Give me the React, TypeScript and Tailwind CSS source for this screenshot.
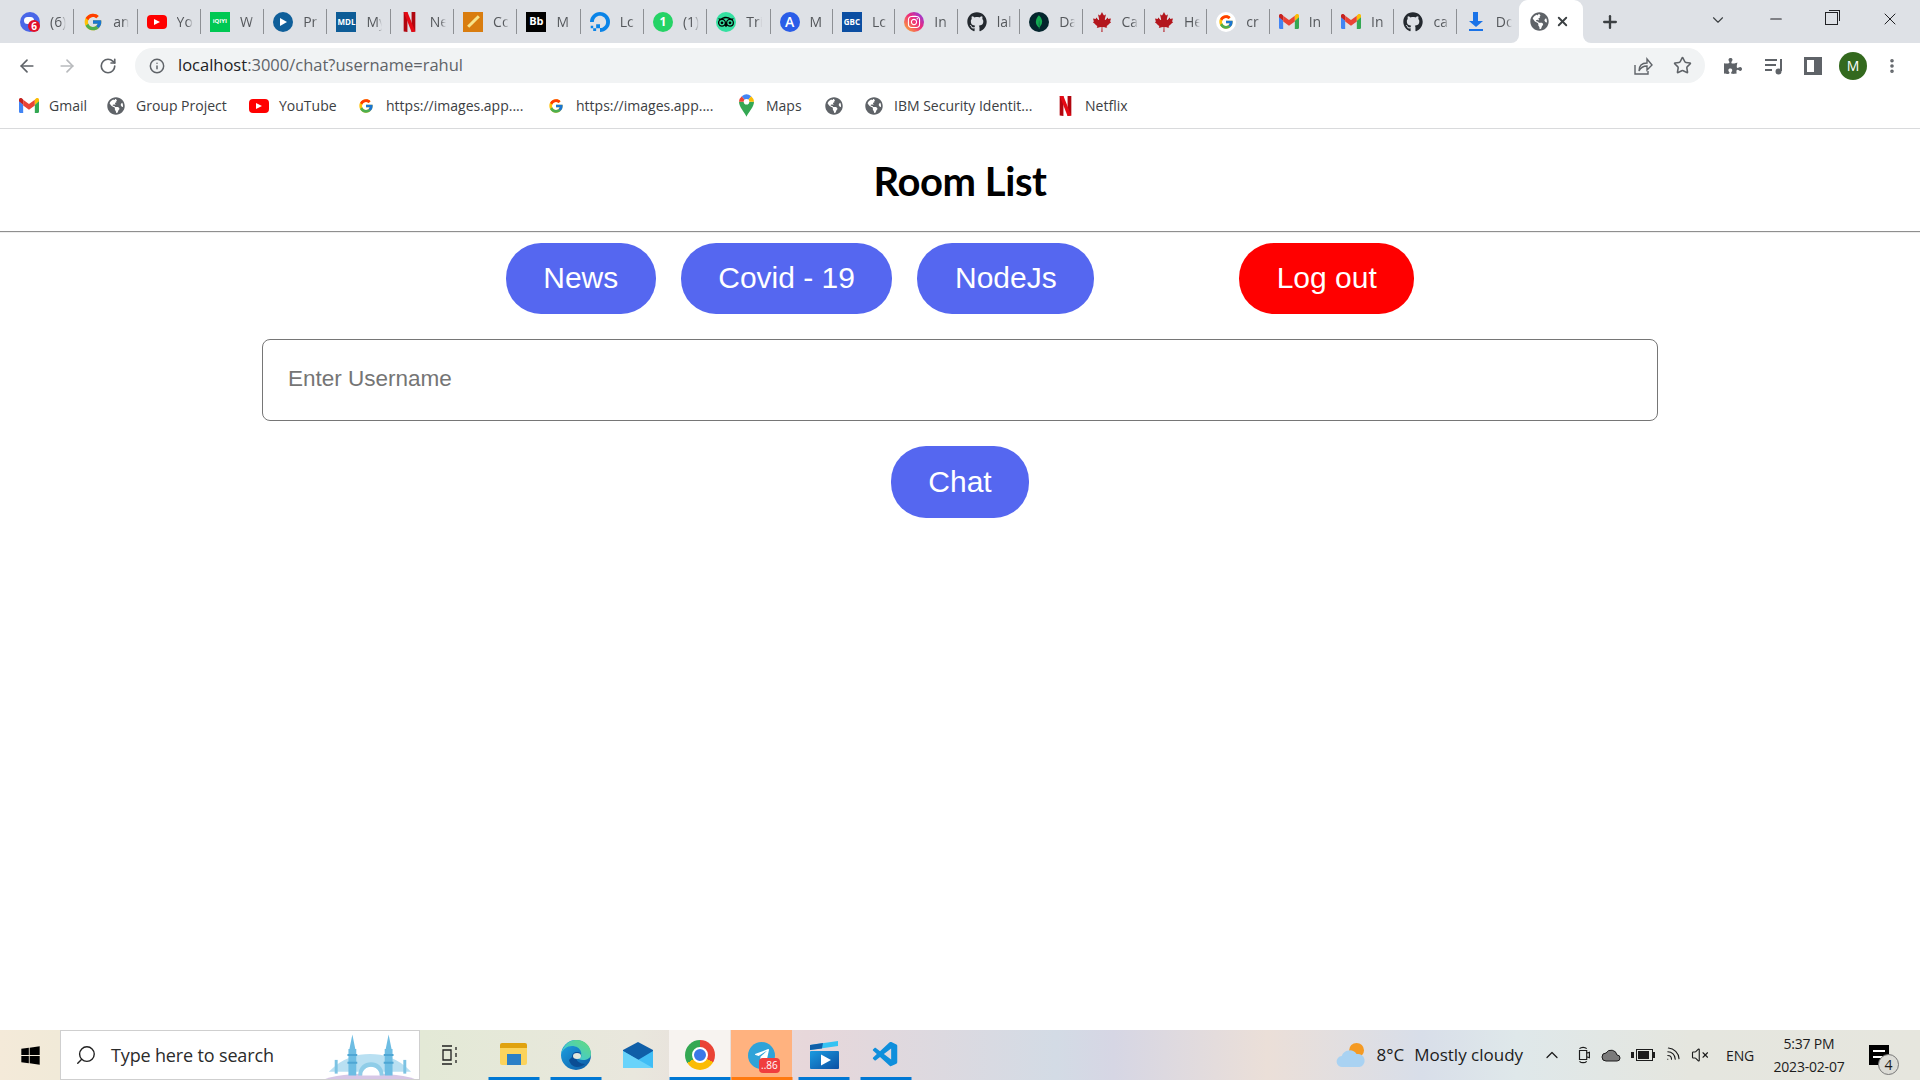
import { ReactNode } from "react";
import {
  ArrowLeft,
  ArrowRight,
  ChevronDown,
  ChevronUp,
  Info,
  Minus,
  MoreVertical,
  Plus,
  RotateCw,
  Search,
  Star,
  VolumeX,
  Wifi,
  X,
} from "lucide-react";
import { FaCanadianMapleLeaf, FaGithub, FaGlobeAmericas, FaInstagram, FaPuzzlePiece, FaTelegramPlane, FaWindows } from "react-icons/fa";
import { FcGoogle } from "react-icons/fc";
import { SiDigitalocean, SiMongodb, SiTripadvisor } from "react-icons/si";
import { VscVscode } from "react-icons/vsc";

const ui = "font-['Open_Sans','Noto_Sans',sans-serif]";

function GmailIcon() {
  return (
    <svg viewBox="0 0 24 18" className="h-[15px] w-5">
      <path d="M0 3v13.5C0 17.3.7 18 1.5 18H5V8z" fill="#4285f4" />
      <path d="M24 3v13.5c0 .8-.7 1.5-1.5 1.5H19V8z" fill="#34a853" />
      <path d="M5 8 0 4V2c0-1.8 2-2.6 3.3-1.6L5 1.7z" fill="#c5221f" />
      <path d="M5 9V2l7 5.2L19 2v7l-7 5.2z" fill="#ea4335" />
      <path d="m19 8 5-4V2c0-1.8-2-2.6-3.3-1.6L19 1.7z" fill="#fbbc04" />
    </svg>
  );
}

function YoutubeIcon() {
  return (
    <div className="flex h-[14px] w-5 items-center justify-center rounded-[4px] bg-[#ff0000]">
      <div className="h-0 w-0 border-y-[3.5px] border-l-[6px] border-y-transparent border-l-white" />
    </div>
  );
}

function NetflixIcon() {
  return (
    <svg viewBox="0 0 14 24" className="h-5 w-[13px]">
      <path d="M0 0h4.5v24L0 23.5z" fill="#b1060f" />
      <path d="M9.5 0H14v23.5L9.5 24z" fill="#b1060f" />
      <path d="M0 0h4.5l9.5 23.5L9.5 24z" fill="#e50914" />
    </svg>
  );
}

function MapsIcon() {
  return (
    <svg viewBox="0 0 16 24" className="h-[23px] w-[15px]">
      <path d="M8 24C6 19 0 14 0 8h16c0 6-6 11-8 16z" fill="#34a853" />
      <path d="M0 8a8 8 0 0 1 3-6l5 6z" fill="#ea4335" />
      <path d="M3 2a8 8 0 0 1 10 0L8 8z" fill="#4285f4" />
      <path d="M13 2a8 8 0 0 1 3 6H8z" fill="#fbbc04" />
      <circle cx="8" cy="8" r="3" fill="#fff" />
    </svg>
  );
}

function Badge6() {
  return (
    <div className="relative flex h-5 w-5 items-center justify-center rounded-full bg-[#4a67e8]">
      <div className="mb-[3px] mr-[3px] h-[7px] w-[10px] rounded-full bg-white" />
      <div className="absolute bottom-0 right-0 flex h-3 w-3 items-center justify-center rounded-full bg-[#e0102a] text-[10px] font-bold leading-none text-white">6</div>
    </div>
  );
}

const Favicons: { icon: ReactNode; label: string }[] = [
  { icon: <Badge6 />, label: "(6)" },
  { icon: <FcGoogle size={20} />, label: "an" },
  { icon: <YoutubeIcon />, label: "Yo" },
  { icon: <div className="flex h-5 w-5 items-center justify-center bg-[#00c853] text-[6px] font-bold text-white">iQIYI</div>, label: "W" },
  { icon: <div className="flex h-5 w-5 items-center justify-center rounded-full bg-[#0f5f9a]"><div className="h-0 w-0 border-y-4 border-l-[7px] border-y-transparent border-l-white" /></div>, label: "Pr" },
  { icon: <div className="flex h-5 w-5 items-center justify-center bg-[#0d5c97] text-[8px] font-bold text-white">MDL</div>, label: "My" },
  { icon: <NetflixIcon />, label: "Ne" },
  { icon: <div className="flex h-5 w-5 items-center justify-center bg-[#d97d0f]"><div className="h-[3px] w-[15px] -rotate-45 bg-[#f7e48a]" /></div>, label: "Cc" },
  { icon: <div className="flex h-5 w-5 items-center justify-center bg-black text-[11px] font-bold text-white">Bb</div>, label: "M" },
  { icon: <SiDigitalocean size={20} color="#0a84e8" />, label: "Lc" },
  { icon: <div className="flex h-5 w-5 items-center justify-center rounded-full bg-[#25d366] text-[12px] font-bold text-white">1</div>, label: "(1)" },
  { icon: <div className="flex h-5 w-5 items-center justify-center rounded-full bg-[#34e0a1]"><SiTripadvisor size={16} color="#000" /></div>, label: "Tri" },
  { icon: <div className="flex h-5 w-5 items-center justify-center rounded-full bg-[#2a5de8] text-[14px] font-semibold text-white">A</div>, label: "M" },
  { icon: <div className="flex h-5 w-5 items-center justify-center bg-[#0b4ea2] text-[8px] font-bold text-white">GBC</div>, label: "Lc" },
  { icon: <div className="flex h-5 w-5 items-center justify-center rounded-full bg-[linear-gradient(45deg,#fdb92c,#ee2a7b_55%,#7b3ff2)]"><FaInstagram size={14} color="#fff" /></div>, label: "In" },
  { icon: <FaGithub size={20} color="#24292f" />, label: "lal" },
  { icon: <div className="flex h-5 w-5 items-center justify-center rounded-full bg-[#04252d]"><SiMongodb size={14} color="#13aa52" /></div>, label: "Da" },
  { icon: <FaCanadianMapleLeaf size={20} color="#b3161d" />, label: "Ca" },
  { icon: <FaCanadianMapleLeaf size={20} color="#b3161d" />, label: "He" },
  { icon: <div className="flex h-5 w-5 items-center justify-center rounded-full bg-white"><FcGoogle size={16} /></div>, label: "cr" },
  { icon: <GmailIcon />, label: "In" },
  { icon: <GmailIcon />, label: "In" },
  { icon: <FaGithub size={20} color="#24292f" />, label: "ca" },
  { icon: <div className="flex w-5 flex-col items-center"><div className="h-[9px] w-[5px] bg-[#1a73e8]" /><div className="h-0 w-0 border-x-[7px] border-t-[6px] border-x-transparent border-t-[#1a73e8]" /><div className="mt-[2px] h-[2px] w-[14px] bg-[#1a73e8]" /></div>, label: "Do" },
];

const Bookmarks: { icon: ReactNode; label: string; className: string }[] = [
  { icon: <GmailIcon />, label: "Gmail", className: "w-[87px]" },
  { icon: <FaGlobeAmericas size={18} color="#5f6368" />, label: "Group Project", className: "w-[143px]" },
  { icon: <YoutubeIcon />, label: "YouTube", className: "w-[107px]" },
  { icon: <FcGoogle size={16} />, label: "https://images.app....", className: "w-[190px]" },
  { icon: <FcGoogle size={16} />, label: "https://images.app....", className: "w-[190px]" },
  { icon: <MapsIcon />, label: "Maps", className: "w-[88px]" },
  { icon: <FaGlobeAmericas size={18} color="#5f6368" />, label: "", className: "w-10" },
  { icon: <FaGlobeAmericas size={18} color="#5f6368" />, label: "IBM Security Identit...", className: "w-[191px]" },
  { icon: <NetflixIcon />, label: "Netflix", className: "w-[80px]" },
];

function TabStrip() {
  return (
    <div className="flex h-[43px] items-stretch bg-[#dee1e6] pl-[11px]">
      {Favicons.map((tab, i) => (
        <div key={i} className={`flex h-[43px] items-center ${i < 12 ? "w-[63.3px]" : "w-[62.4px]"}`}>
          <div className={`flex h-[25px] w-full items-center gap-[10px] pl-[9px] ${i < Favicons.length - 1 ? "border-r border-[#8d9094]" : ""}`}>
            <div className="flex h-5 w-5 shrink-0 items-center justify-center overflow-hidden">{tab.icon}</div>
            <span className="w-4 overflow-hidden whitespace-nowrap text-[14px] text-[#55585c] [mask-image:linear-gradient(to_right,black_65%,transparent)]">{tab.label}</span>
          </div>
        </div>
      ))}
      <div className="relative flex h-[43px] w-16 items-center rounded-t-[9px] bg-white pl-[11px]">
        <div className="absolute -left-2 bottom-0 h-2 w-2 bg-white">
          <div className="h-2 w-2 rounded-br-[8px] bg-[#dee1e6]" />
        </div>
        <div className="absolute -right-2 bottom-0 h-2 w-2 bg-white">
          <div className="h-2 w-2 rounded-bl-[8px] bg-[#dee1e6]" />
        </div>
        <FaGlobeAmericas size={19} color="#5f6368" />
        <X size={15} strokeWidth={3} className="ml-[6px] text-[#3c4043]" />
      </div>
      <div className="flex flex-1 items-center">
        <Plus size={20} strokeWidth={2.8} className="ml-[17px] text-[#3c4043]" />
        <ChevronDown size={18} strokeWidth={1.5} className="ml-[89px] mt-[-4px] text-[#3c4043]" />
        <Minus size={18} strokeWidth={1.5} className="ml-[40px] mt-[-6px] text-[#202124]" />
        <div className="relative ml-[40px] mt-[-6px] h-[13px] w-[13px] border border-[#202124]">
          <div className="absolute -right-[3px] -top-[3px] h-[11px] w-[11px] border-r border-t border-[#202124]" />
        </div>
        <X size={20} strokeWidth={1.2} className="ml-[42px] mt-[-5px] text-[#202124]" />
      </div>
    </div>
  );
}

function Toolbar() {
  return (
    <div className="flex h-[42px] items-center bg-white pt-[3px]">
      <ArrowLeft size={20} strokeWidth={2} className="ml-[17px] text-[#5f6368]" />
      <ArrowRight size={20} strokeWidth={2} className="ml-5 text-[#b8babd]" />
      <RotateCw size={18} strokeWidth={2.2} className="ml-[22px] text-[#5f6368]" />
      <div className="ml-[18px] flex h-[35px] w-[1570px] items-center rounded-full bg-[#f1f3f4] pl-[14px]">
        <Info size={16} strokeWidth={2.2} className="text-[#5f6368]" />
        <span className="ml-[13px] text-[16.5px] text-[#5f6368]"><span className="text-[#202124]">localhost</span>:3000/chat?username=rahul</span>
        <svg viewBox="0 0 20 20" className="ml-auto h-5 w-5 fill-none stroke-[#5f6368] stroke-[1.4]">
          <path d="M2 9v9h13v-3" />
          <path d="M6 15c0-5 3-8 8-8V3l5 6-5 5v-4c-4 0-6 1-8 5z" />
        </svg>
        <Star size={19} strokeWidth={2} className="ml-[20px] mr-[13px] text-[#5f6368]" />
      </div>
      <FaPuzzlePiece size={18} color="#5f6368" className="ml-[19px]" />
      <svg viewBox="0 0 20 20" className="ml-[22px] h-5 w-5 fill-none stroke-[#5f6368] stroke-2">
        <path d="M1 4h12M1 9h11M1 14h7M17 3v12" />
        <circle cx="14.5" cy="15.5" r="2" className="fill-[#5f6368]" />
      </svg>
      <div className="ml-[20px] h-[18px] w-[18px] border-y-[3px] border-l-[3px] border-r-[8px] border-[#5f6368]" />
      <div className="ml-[17px] flex h-[28px] w-[28px] items-center justify-center rounded-full bg-[#33691e] text-[14px] text-white">M</div>
      <MoreVertical size={18} strokeWidth={2.8} className="ml-[16px] text-[#5f6368]" />
    </div>
  );
}

function BookmarkBar() {
  return (
    <div className="flex h-[44px] items-center border-b border-[#d9dadc] bg-white pb-[2px] pl-[19px]">
      {Bookmarks.map((b, i) => (
        <div key={i} className={`flex items-center gap-[10px] ${b.className}`}>
          <div className="flex h-5 w-5 shrink-0 items-center justify-center">{b.icon}</div>
          {b.label && <span className="whitespace-nowrap text-[14px] text-[#3c4043]">{b.label}</span>}
        </div>
      ))}
    </div>
  );
}

function PillButton({ label, className = "bg-[#5567f0]" }: { label: string; className?: string }) {
  return (
    <button className={`h-[71px] rounded-[35px] px-[37.5px] pb-[2px] font-['Liberation_Sans',Arial,sans-serif] text-[30px] text-white ${className}`}>
      {label}
    </button>
  );
}

function RoomPage() {
  return (
    <main className="flex flex-1 flex-col items-center bg-white">
      <div className="flex h-[103px] w-full items-center justify-center border-b border-[#8f8f8f] pt-px shadow-[0_1px_0_#eeeeee]">
        <h1 className="font-['Lato',sans-serif] text-[40px] font-bold tracking-[-0.45px] text-black">Room List</h1>
      </div>
      <div className="mt-[11px] flex items-center gap-[25px]">
        <PillButton label="News" />
        <PillButton label="Covid - 19" />
        <PillButton label="NodeJs" />
        <PillButton label="Log out" className="ml-[120px] bg-[#ff0000]" />
      </div>
      <input
        placeholder="Enter Username"
        className="mt-[25px] h-[82px] w-[1396px] rounded-[8px] border border-[#767676] px-[25px] pb-[2px] font-['Liberation_Sans',Arial,sans-serif] text-[22.5px] placeholder:text-[#757575]"
      />
      <PillButton label="Chat" className="mt-[25px] !h-[72px] bg-[#5567f0]" />
    </main>
  );
}

function Castle() {
  return (
    <svg viewBox="0 0 100 50" className="h-[50px] w-[98px]">
      <ellipse cx="50" cy="52" rx="48" ry="8" fill="#d7c7e6" />
      <path d="M8 42c14-14 28-18 42-18s28 4 42 18z" fill="#b9e0f2" />
      <path d="M32 4l3 15h1v27h-8V19h1zM69 4l3 15h1v27h-8V19h1z" fill="#6dbde3" />
      <path d="M27 24h10v2H27zM27 32h10v2H27zM64 24h10v2H64zM64 32h10v2H64z" fill="#4ea6d4" />
      <path d="M42 46c0-12 18-12 18 0z" fill="#fff" />
      <path d="M38 46c0-18 26-18 26 0h-4c0-12-18-12-18 0z" fill="#8fcde8" />
      <rect x="14" y="30" width="3" height="14" fill="#7cc3e3" />
      <rect x="84" y="30" width="3" height="14" fill="#7cc3e3" />
    </svg>
  );
}

function EdgeIcon() {
  return (
    <svg viewBox="0 0 30 30" className="h-[30px] w-[30px]">
      <defs>
        <linearGradient id="edge-ring" x1="0" y1="0" x2="1" y2="1">
          <stop offset="0" stopColor="#1fa4e4" />
          <stop offset="1" stopColor="#0c59a4" />
        </linearGradient>
        <linearGradient id="edge-top" x1="0" y1="1" x2="1" y2="0">
          <stop offset="0" stopColor="#35c1f1" />
          <stop offset="1" stopColor="#66dc78" />
        </linearGradient>
      </defs>
      <circle cx="15" cy="15" r="15" fill="url(#edge-ring)" />
      <path d="M15 0c9 0 15 6 15 14 0 4-4 6-8 6-3 0-5-1-6-3 3 0 5-2 4-5-1-4-5-6-9-6-5 0-9 3-11 8C2 6 8 0 15 0z" fill="url(#edge-top)" />
      <path d="M11 17c0-3 2-5 5-5s5 2 4 5c-1 1-3 1-5 0 0 4 4 7 9 7-2 2-5 3-8 3-4 0-7-3-8-7z" fill="#0a4d94" />
      <ellipse cx="16" cy="16" rx="4" ry="3" fill="#e3e7dc" />
    </svg>
  );
}

function Underline({ color = "bg-[#0078d4]", width }: { color?: string; width: string }) {
  return <div className={`absolute bottom-0 left-1/2 h-[3px] -translate-x-1/2 ${width} ${color}`} />;
}

function Taskbar() {
  return (
    <footer className={`${ui} flex h-[50px] items-stretch bg-[linear-gradient(to_right,#f4ead9_0%,#f1ead8_3%,#e3e9d6_22%,#e9e7dd_33%,#e7d7da_42%,#d3dbe5_55%,#d6d6e4_58%,#ebdfd8_66%,#d8dee9_74%,#dfe8ea_79%,#e5e6df_88%,#e6e6de_100%)]`}>
      <div className="flex w-[60px] items-center justify-center">
        <FaWindows size={21} color="#000" />
      </div>
      <div className="flex w-[360px] items-center overflow-hidden border border-[#cfcfcf] bg-white pl-[14px]">
        <Search size={22} strokeWidth={1.5} className="-scale-x-100 text-[#202020]" />
        <span className="ml-[14px] text-[18px] tracking-[-0.15px] text-[#2b2b2b]">Type here to search</span>
        <div className="ml-auto"><Castle /></div>
      </div>
      <div className="flex w-[61px] items-center justify-center">
        <svg viewBox="0 0 20 20" className="h-5 w-5 fill-none stroke-[#202020] stroke-[1.3]">
          <path d="M1 1h10M1 19h10M2 5h8v10H2zM15 2v3M15 8v4M15 15v3" />
        </svg>
      </div>
      <div className="ml-[7px] flex">
        <div className="relative flex w-[51px] items-center justify-center">
          <div className="mb-[2px] h-[22px] w-[27px] rounded-[2px] bg-[linear-gradient(#e0a20f_0_24%,#fbd35c_24%)]">
            <div className="mx-auto mt-[11px] h-[11px] w-[14px] bg-[#2a7fc7]" />
          </div>
          <Underline width="w-[51px]" />
        </div>
        <div className="relative ml-[11px] flex w-[51px] items-center justify-center">
          <EdgeIcon />
          <Underline width="w-[51px]" />
        </div>
        <div className="relative ml-[11px] flex w-[51px] items-center justify-center">
          <svg viewBox="0 0 30 26" className="h-[26px] w-[30px]">
            <path d="M0 8 15 0l15 8v18H0z" fill="#0f5fa8" />
            <path d="M0 9l15 9 15-9v17H0z" fill="#40bdf5" />
            <path d="M0 9v17h30z" fill="#69d3fa" />
          </svg>
        </div>
        <div className="relative ml-[6px] flex w-[61px] items-center justify-center bg-[#f7f3f0]">
          <div className="h-[30px] w-[30px] rounded-full bg-[conic-gradient(#ea4335_0_33%,#fbbc04_33%_66%,#34a853_66%)] p-[7px]">
            <div className="h-4 w-4 rounded-full border-[2px] border-white bg-[#3b78e7]" />
          </div>
          <Underline width="w-[61px]" />
        </div>
        <div className="relative ml-px flex w-[61px] items-center justify-center bg-[#ffb27f]">
          <div className="flex h-[27px] w-[27px] items-center justify-center rounded-full bg-[#2fa3d9]">
            <FaTelegramPlane size={16} color="#fff" />
          </div>
          <div className="absolute left-[28px] top-[28px] rounded-[4px] bg-[#f03e3e] px-[2px] text-[10px] leading-[15px] text-white">..86</div>
          <Underline color="bg-[#ff7a0f]" width="w-[61px]" />
        </div>
        <div className="relative ml-[6px] flex w-[51px] items-center justify-center">
          <svg viewBox="0 0 30 28" className="h-7 w-[30px]">
            <defs>
              <linearGradient id="video-body" x1="0" y1="0" x2="1" y2="1">
                <stop offset="0" stopColor="#1a9be0" />
                <stop offset="1" stopColor="#0b4fa3" />
              </linearGradient>
            </defs>
            <path d="M1 4 29 0v5L1 9z" fill="#35c3f3" />
            <path d="M1 4 14 2l-1 5.5L1 9z" fill="#0f5fa8" />
            <rect x="1" y="10" width="29" height="18" rx="1" fill="url(#video-body)" />
            <path d="M12 13.5 22 19l-10 5.5z" fill="#fff" />
          </svg>
          <Underline width="w-[51px]" />
        </div>
        <div className="relative ml-[11px] flex w-[51px] items-center justify-center">
          <VscVscode size={30} color="#0f8fdc" />
          <Underline width="w-[51px]" />
        </div>
      </div>
      <div className="ml-auto flex items-center text-[#1c1c1c]">
        <svg viewBox="0 0 32 28" className="h-[26px] w-[30px]">
          <circle cx="22" cy="9" r="8" fill="#f59a23" />
          <path d="M7 27a6 6 0 0 1-1-12 9 9 0 0 1 16-2 7 7 0 0 1 3 14z" fill="#a9d2f2" />
        </svg>
        <span className="ml-[10px] text-[17px]">8°C</span>
        <span className="ml-[10px] text-[17px]">Mostly cloudy</span>
        <ChevronUp size={20} strokeWidth={1.5} className="ml-[19px]" />
        <svg viewBox="0 0 16 20" className="ml-[14px] h-[18px] w-4 fill-none stroke-[#1c1c1c] stroke-[1.3]">
          <path d="M3 5h8v10H3zM11 8l3-1v6l-3-1M3 3c2-2 6-2 8 0M3 17c2 2 6 2 8 0" />
        </svg>
        <svg viewBox="0 0 20 14" className="ml-[9px] h-[14px] w-5 fill-[#7a7a7a] stroke-[#1c1c1c]">
          <path d="M5 13a4 4 0 0 1 0-8 6 6 0 0 1 11 2 3 3 0 0 1 0 6z" />
        </svg>
        <div className="ml-[10px] flex items-center">
          <div className="mr-[2px] h-[6px] w-[3px] bg-[#1c1c1c]" />
          <div className="h-[12px] w-[17px] border border-[#1c1c1c] p-px">
            <div className="h-full w-[11px] bg-[#1c1c1c]" />
          </div>
          <div className="h-[6px] w-[2px] bg-[#1c1c1c]" />
        </div>
        <Wifi size={18} strokeWidth={1.5} className="ml-[8px] rotate-45" />
        <VolumeX size={18} strokeWidth={1.5} className="ml-[10px]" />
        <span className="ml-[17px] text-[14px] tracking-[-0.2px]">ENG</span>
        <div className="ml-[17px] flex w-[76px] flex-col items-center text-[14px] leading-[23px] tracking-[-0.2px]">
          <span>5:37 PM</span>
          <span>2023-02-07</span>
        </div>
        <div className="relative ml-[22px] mr-[31px] h-[20px] w-[20px] bg-black">
          <div className="mx-[4px] mt-[5px] h-[8px] border-y-2 border-white" />
          <div className="absolute -bottom-[10px] -right-[10px] flex h-[21px] w-[21px] items-center justify-center rounded-full border border-[#777] bg-[#dcdcd6] text-[14px]">4</div>
        </div>
      </div>
    </footer>
  );
}

export default function App() {
  return (
    <div className={`${ui} flex h-screen w-full flex-col overflow-hidden bg-white`}>
      <TabStrip />
      <Toolbar />
      <BookmarkBar />
      <RoomPage />
      <Taskbar />
    </div>
  );
}
